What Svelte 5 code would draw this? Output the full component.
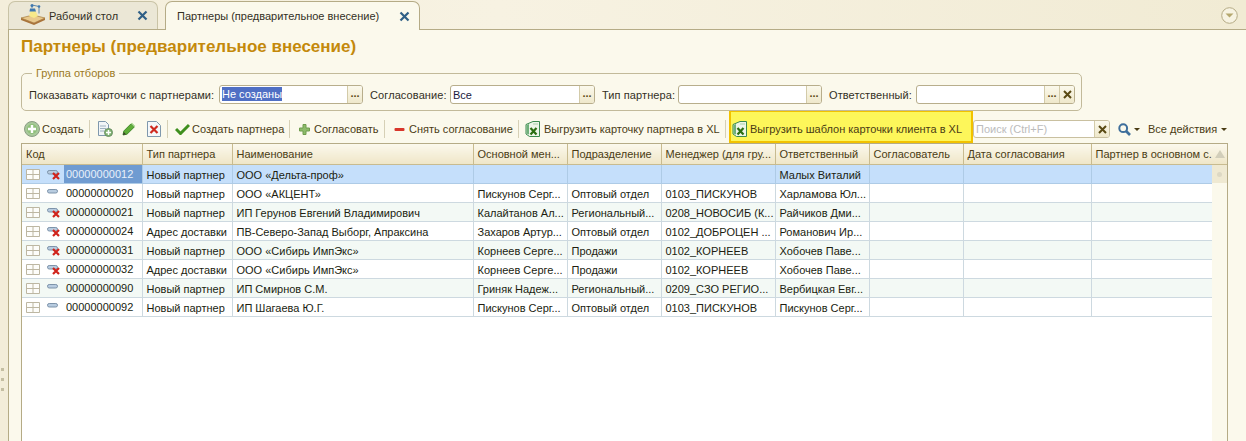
<script>
  const columns = [
    { title: 'Код', width: 120 },
    { title: 'Тип партнера', width: 90 },
    { title: 'Наименование', width: 241 },
    { title: 'Основной мен...', width: 94 },
    { title: 'Подразделение', width: 94 },
    { title: 'Менеджер (для гру...', width: 114 },
    { title: 'Ответственный', width: 94 },
    { title: 'Согласователь', width: 94 },
    { title: 'Дата согласования', width: 128 },
    { title: 'Партнер в основном с.', width: 122 }
  ];

  const rows = [
    { del: true, code: '00000000012', type: 'Новый партнер', name: 'ООО «Дельта-проф»', mgr: '', dept: '', group: '', owner: 'Малых Виталий' },
    { del: false, code: '00000000020', type: 'Новый партнер', name: 'ООО «АКЦЕНТ»', mgr: 'Пискунов Серг...', dept: 'Оптовый отдел', group: '0103_ПИСКУНОВ', owner: 'Харламова Юл...' },
    { del: true, code: '00000000021', type: 'Новый партнер', name: 'ИП Герунов Евгений Владимирович', mgr: 'Калайтанов Ал...', dept: 'Региональный...', group: '0208_НОВОСИБ (К...', owner: 'Райчиков Дми...' },
    { del: true, code: '00000000024', type: 'Адрес доставки', name: 'ПВ-Северо-Запад Выборг, Апраксина', mgr: 'Захаров Артур...', dept: 'Оптовый отдел', group: '0102_ДОБРОЦЕН ...', owner: 'Романович Ир...' },
    { del: true, code: '00000000031', type: 'Новый партнер', name: 'ООО «Сибирь ИмпЭкс»', mgr: 'Корнеев Серге...', dept: 'Продажи', group: '0102_КОРНЕЕВ', owner: 'Хобочев Паве...' },
    { del: true, code: '00000000032', type: 'Адрес доставки', name: 'ООО «Сибирь ИмпЭкс»', mgr: 'Корнеев Серге...', dept: 'Продажи', group: '0102_КОРНЕЕВ', owner: 'Хобочев Паве...' },
    { del: false, code: '00000000090', type: 'Новый партнер', name: 'ИП Смирнов С.М.', mgr: 'Гриняк Надеж...', dept: 'Региональный...', group: '0209_СЗО РЕГИО...', owner: 'Вербицкая Евг...' },
    { del: false, code: '00000000092', type: 'Новый партнер', name: 'ИП Шагаева Ю.Г.', mgr: 'Пискунов Серг...', dept: 'Оптовый отдел', group: '0103_ПИСКУНОВ', owner: 'Пискунов Серг...' }
  ];
</script>

{#snippet closeIcon()}
  <svg class="close" width="11" height="11" viewBox="0 0 11 11">
    <path d="M1.5 1.5l8 8M9.5 1.5l-8 8" stroke="#2f5f86" stroke-width="2.2" fill="none" />
  </svg>
{/snippet}

{#snippet excelIcon()}
  <svg width="15" height="16" viewBox="0 0 15 16">
    <path d="M1 3.500L8 .5h6.500v15H4.500L1 13z" fill="#edf5e8" stroke="#3b8a4e" />
    <path d="M1.500 4L4 3v10.500l-2.500-1z" fill="#6fb07a" />
    <path d="M5.500 7l6 6.500M11.500 7l-6 6.500" stroke="#2c6e12" stroke-width="2.200" fill="none" />
    <path d="M8 3h5" stroke="#a9cfa9" fill="none" />
  </svg>
{/snippet}

{#snippet caret()}
  <svg class="caret" width="6" height="3" viewBox="0 0 6 3"><path d="M0 0h6L3 3z" fill="#4a3c14" /></svg>
{/snippet}

{#snippet stateIcon(del)}
  <svg class="state" width="14" height="12" viewBox="0 0 14 12">
    <rect x="0.5" y="2.5" width="10" height="3.5" rx="1.7" fill="#b8cce0" stroke="#7d93aa" />
    {#if del}
      <path d="M6 5l6 6M12 5l-6 6" stroke="#d0231b" stroke-width="2.2" fill="none" />
    {/if}
  </svg>
{/snippet}

<div class="page">
  <header class="tabs">
    <div class="tab">
      <svg class="desk" width="26" height="24" viewBox="0 0 26 24">
        <path d="M1 15l12-3 12 3-11 5z" fill="#e9c98c" stroke="#a57a3c" stroke-width="0.7" />
        <path d="M1 15v2l13 5v-2zM25 15v2l-11 5v-2z" fill="#a9743a" />
        <path d="M9 13l2-6h4l3 6-4 2z" fill="#f7e98a" />
        <path d="M10 5.500h5l1 3h-6.500z" fill="#3f78b0" />
        <path d="M12 5V2l7 1.500v7" stroke="#5c87ad" stroke-width="1" fill="none" />
        <circle cx="12" cy="2.500" r="1.500" fill="#3f78b0" />
        <circle cx="19" cy="3.500" r="1.300" fill="#3f78b0" />
      </svg>
      <span class="tab-text">Рабочий стол</span>
      {@render closeIcon()}
    </div>
    <div class="tab active">
      <span class="tab-text">Партнеры (предварительное внесение)</span>
      {@render closeIcon()}
    </div>
    <svg class="menu-round" width="17" height="17" viewBox="0 0 17 17">
      <circle cx="8.500" cy="8.500" r="7.800" fill="#f7f3e2" stroke="#b5ab86" />
      <path d="M4.500 6.500h8l-4 4z" fill="#b5a86f" />
    </svg>
  </header>

  <div class="main">
    <div class="grip"><i></i><i></i><i></i></div>
    <section class="panel">
      <h1>Партнеры (предварительное внесение)</h1>

      <fieldset class="filters">
        <legend>Группа отборов</legend>
        <span class="label l1">Показавать карточки с партнерами:</span>
        <div class="field f1">
          <span class="value"><span class="selected">Не созданы</span></span>
          <span class="pick">...</span>
        </div>
        <span class="label l2">Согласование:</span>
        <div class="field f2">
          <span class="value">Все</span>
          <span class="pick">...</span>
        </div>
        <span class="label l3">Тип партнера:</span>
        <div class="field f3">
          <span class="value"></span>
          <span class="pick">...</span>
        </div>
        <span class="label l4">Ответственный:</span>
        <div class="field f4">
          <span class="value"></span>
          <span class="pick">...</span>
          <span class="pick clear">
            <svg width="9" height="9" viewBox="0 0 9 9"><path d="M1 1l7 7M8 1l-7 7" stroke="#5a4a14" stroke-width="2" fill="none" /></svg>
          </span>
        </div>
      </fieldset>

      <div class="toolbar">
        <button class="b-create">
          <svg width="16" height="16" viewBox="0 0 16 16">
            <circle cx="8" cy="8" r="7.500" fill="#a8c99a" stroke="#8a9c84" />
            <circle cx="8" cy="8" r="5" fill="#8fc07a" />
            <path d="M8 4v8M4 8h8" stroke="#fff" stroke-width="2.400" />
          </svg>
          Создать
        </button>
        <i class="sep"></i>
        <button class="b-copy">
          <svg width="16" height="16" viewBox="0 0 16 16">
            <path d="M1.500.5h7l3 3v11h-10z" fill="#f2f5f7" stroke="#7f98ad" />
            <path d="M3 5h6M3 7.500h6M3 10h4" stroke="#9fb2c2" />
            <circle cx="11.500" cy="11.500" r="4" fill="#7fb36f" stroke="#6d8f68" />
            <path d="M11.500 9v5M9 11.500h5" stroke="#fff" stroke-width="1.500" />
          </svg>
        </button>
        <button class="b-edit">
          <svg width="14" height="14" viewBox="0 0 14 14">
            <path d="M1 13l.8-4L9 1.800l3.300 3.200L5 12.200z" fill="#5fae38" stroke="#2f7a1c" stroke-width="0.8" />
            <path d="M9 1.800l1-1 3.200 3.200-1 1z" fill="#a5d48a" />
            <path d="M1 13l.8-3 2.200 2.200z" fill="#3a3a2a" />
          </svg>
        </button>
        <button class="b-del">
          <svg width="14" height="16" viewBox="0 0 14 16">
            <path d="M.5.500h9l4 4v11H.5z" fill="#f5f8fa" stroke="#7f98ad" />
            <path d="M3.500 5l7 7M10.500 5l-7 7" stroke="#cf2a20" stroke-width="2.200" />
          </svg>
        </button>
        <i class="sep"></i>
        <button class="b-partner">
          <svg width="15" height="12" viewBox="0 0 15 12"><path d="M1 6l4.500 4.500L14 2" stroke="#3f8f1e" stroke-width="3" fill="none" /></svg>
          Создать партнера
        </button>
        <i class="sep"></i>
        <button class="b-agree">
          <svg width="11" height="11" viewBox="0 0 11 11"><path d="M4 .5h3v3.500h3.500v3H7v3.500H4V7H.5V4H4z" fill="#8dbb6a" stroke="#6f9c4e" /></svg>
          Согласовать
        </button>
        <i class="sep"></i>
        <button class="b-revoke">
          <svg width="11" height="11" viewBox="0 0 11 11"><rect x="0.500" y="4" width="10" height="3" rx="1" fill="#d8362c" /></svg>
          Снять согласование
        </button>
        <i class="sep"></i>
        <button class="b-xl">
          {@render excelIcon()}
          Выгрузить карточку партнера в XL
        </button>
        <i class="sep"></i>
        <button class="hl">
          {@render excelIcon()}
          Выгрузить шаблон карточки клиента в XL
        </button>
        <div class="search">
          <span class="value ph">Поиск (Ctrl+F)</span>
          <span class="pick clear">
            <svg width="9" height="9" viewBox="0 0 9 9"><path d="M1 1l7 7M8 1l-7 7" stroke="#5a4a14" stroke-width="2" fill="none" /></svg>
          </span>
        </div>
        <button class="b-find">
          <svg width="13" height="13" viewBox="0 0 13 13">
            <circle cx="5.200" cy="5.200" r="3.900" fill="none" stroke="#3f6f9c" stroke-width="2" />
            <path d="M8 8l4 4" stroke="#3f6f9c" stroke-width="2.600" />
          </svg>
          {@render caret()}
        </button>
        <button class="b-all">Все действия {@render caret()}</button>
      </div>

      <div class="grid">
        <div class="grid-body">
          <table>
            <colgroup>
              {#each columns as c}
                <col style="width: {c.width}px" />
              {/each}
            </colgroup>
            <thead>
              <tr>
                {#each columns as c}
                  <th>{c.title}</th>
                {/each}
              </tr>
            </thead>
            <tbody>
              {#each rows as r, i}
                <tr class:current={i === 0} class:alt={i % 2 === 0}>
                  <td class="code">
                    <div class="code-wrap">
                      <svg class="tree" width="14" height="11" viewBox="0 0 14 11">
                        <path d="M.5.500h13v10H.500zM7 .5v10M.5 5.500h13" fill="#fdfdfa" stroke="#bdb7a2" />
                      </svg>
                      {@render stateIcon(r.del)}
                      <span class="code-text">{r.code}</span>
                    </div>
                  </td>
                  <td>{r.type}</td>
                  <td>{r.name}</td>
                  <td>{r.mgr}</td>
                  <td>{r.dept}</td>
                  <td>{r.group}</td>
                  <td>{r.owner}</td>
                  <td></td>
                  <td></td>
                  <td></td>
                </tr>
              {/each}
            </tbody>
          </table>
        </div>
        <div class="scroll">
          <div class="scroll-up">
            <svg width="10" height="8" viewBox="0 0 10 8"><path d="M5 0l5 8H0z" fill="#d2ceba" /></svg>
          </div>
          <div class="scroll-thumb"><i></i></div>
        </div>
      </div>
    </section>
  </div>
</div>

<style>
  :global(body) {
    margin: 0;
    font-family: "Liberation Sans", Arial, sans-serif;
    font-size: 11px;
    color: #33301f;
  }
  svg {
    flex: none;
  }
  .page {
    display: flex;
    flex-direction: column;
    height: 100vh;
    overflow: hidden;
    background: #f3edd9;
  }

  .tabs {
    display: flex;
    align-items: flex-end;
    height: 29px;
    padding-left: 8px;
    gap: 7px;
    flex: none;
    background: linear-gradient(90deg, #f4eedb, #f7f2e2 40%, #f1ebd4);
    position: relative;
  }
  .tab {
    box-sizing: border-box;
    width: 150px;
    height: 28px;
    display: flex;
    align-items: center;
    padding: 0 9px 0 11px;
    border: 1px solid #c9c3a6;
    border-bottom: none;
    border-radius: 7px 7px 0 0;
    background: #ebe7d6;
    color: #33301f;
  }
  .tab.active {
    width: 255px;
    height: 29px;
    margin-bottom: -1px;
    position: relative;
    background: #fbf9ec;
    border-color: #b5ab86;
  }
  .desk {
    margin: -2px 3px 0 0;
  }
  .tab-text {
    flex: 1;
    white-space: nowrap;
  }
  .menu-round {
    position: absolute;
    right: 8px;
    top: 7px;
  }

  .main {
    flex: 1;
    display: flex;
    min-height: 0;
  }
  .grip {
    width: 8px;
    flex: none;
    box-sizing: border-box;
    padding: 339px 0 0 1px;
    display: flex;
    flex-direction: column;
    gap: 7px;
  }
  .grip i {
    width: 3px;
    height: 3px;
    background: #c4bea2;
  }
  .panel {
    flex: 1;
    min-width: 0;
    box-sizing: border-box;
    display: flex;
    flex-direction: column;
    padding: 0 18px 0 12px;
    background: #fbf9ec;
    border-top: 1px solid #b5ab86;
    border-left: 1px solid #b5ab86;
  }
  h1 {
    margin: 7px 0 0;
    height: 20px;
    line-height: 20px;
    font-size: 17px;
    font-weight: bold;
    color: #c4890b;
    white-space: nowrap;
  }

  .filters {
    box-sizing: border-box;
    width: 1061px;
    height: 44px;
    margin: 10px 0 0;
    padding: 6px 0 0 7px;
    min-width: 0;
    display: flex;
    align-items: flex-start;
    border: 1px solid #c2ba9a;
    border-radius: 5px;
  }
  legend {
    margin-left: 3px;
    padding: 0 4px;
    color: #9c7a1e;
    line-height: 12px;
    font-size: 11px;
  }
  .label {
    white-space: nowrap;
    line-height: 20px;
    letter-spacing: 0.1px;
    flex: none;
  }
  .l1 { width: 190px; }
  .l2 { width: 80px; }
  .l3 { width: 76px; }
  .l4 { width: 87px; }
  .field {
    box-sizing: border-box;
    height: 19px;
    display: flex;
    border: 1px solid #b8ae8c;
    border-radius: 3px;
    background: #fff;
    overflow: hidden;
    margin-right: 7px;
    flex: none;
  }
  .f1, .f3 { width: 144px; }
  .f2 { width: 145px; }
  .f4 { width: 159px; margin-right: 0; }
  .value {
    flex: 1;
    min-width: 0;
    line-height: 18px;
    padding-left: 2px;
    color: #1a1a40;
    white-space: nowrap;
  }
  .selected {
    display: inline-block;
    height: 14px;
    line-height: 14px;
    background: #4f6fc4;
    color: #fff;
    vertical-align: 1px;
  }
  .pick {
    flex: none;
    width: 14px;
    border-left: 1px solid #d3cba9;
    background: linear-gradient(#fbf9ec, #efe8cb);
    color: #5a4a14;
    font-weight: bold;
    line-height: 15px;
    text-align: center;
  }
  .clear {
    display: flex;
    align-items: center;
    justify-content: center;
  }

  .toolbar {
    box-sizing: border-box;
    display: flex;
    align-items: center;
    height: 32px;
    padding-top: 4px;
    flex: none;
    color: #4a3c14;
  }
  button {
    font: inherit;
    color: inherit;
    border: 0;
    background: none;
    padding: 0;
    display: flex;
    align-items: center;
    white-space: nowrap;
    flex: none;
  }
  .sep {
    width: 1px;
    height: 18px;
    flex: none;
    background: #d6d0b6;
  }
  .b-create { gap: 2px; margin-left: 3px; width: 65px; }
  .b-copy { margin-left: 7px; }
  .b-edit { margin-left: 9px; }
  .b-del { margin: 0 6px 0 11px; }
  .b-partner { gap: 2px; margin-left: 7px; width: 114px; }
  .b-agree { gap: 4px; margin-left: 9px; width: 85px; }
  .b-revoke { gap: 4px; margin-left: 9px; width: 124px; }
  .b-xl { gap: 4px; margin-left: 6px; width: 200px; }
  .hl {
    box-sizing: border-box;
    width: 244px;
    height: 32px;
    margin: -4px 0 0 3px;
    padding: 4px 0 0 1px;
    gap: 3px;
    background: #fdf65a;
    border: 1px solid #f2c200;
    border-width: 1px 2px 2px 2px;
  }
  .search {
    box-sizing: border-box;
    width: 137px;
    height: 18px;
    display: flex;
    flex: none;
    border: 1px solid #c9c0a0;
    border-radius: 3px;
    background: #fff;
    overflow: hidden;
  }
  .ph {
    color: #bcbcbc;
    line-height: 16px;
  }
  .b-find { gap: 3px; margin-left: 8px; width: 22px; }
  .b-all { gap: 4px; margin-left: 8px; }

  .grid {
    flex: 1;
    min-height: 0;
    display: flex;
    box-sizing: border-box;
    width: 1207px;
    background: #fff;
    border: 1px solid #b5ab86;
    border-bottom: 0;
  }
  .grid-body {
    width: 1190px;
    flex: none;
  }
  table {
    table-layout: fixed;
    width: 1190px;
    border-collapse: collapse;
  }
  th {
    height: 20px;
    padding: 0 0 0 4px;
    font-weight: normal;
    text-align: left;
    color: #4a3c14;
    white-space: nowrap;
    overflow: hidden;
    background: linear-gradient(#fbf8ec, #efe6c8);
    border-right: 1px solid #c8bb90;
    border-bottom: 1px solid #c8bb90;
  }
  td {
    height: 17px;
    padding: 1px 0 0 4px;
    color: #201d10;
    white-space: nowrap;
    overflow: hidden;
    border-right: 1px solid #cdd9e0;
    border-bottom: 1px solid #cdd9e0;
  }
  tr.alt td { background: #f3f9f5; }
  tr.current td {
    background: #c5dffb;
    border-color: #aecbe6;
  }
  td.code { padding: 0; height: 18px; }
  .code-wrap {
    display: flex;
    align-items: center;
    height: 18px;
    padding-left: 4px;
  }
  .state { margin-left: 7px; }
  .code-text {
    box-sizing: border-box;
    margin-left: 3px;
    padding: 1px 0 0 2px;
    flex: 1;
    line-height: 17px;
  }
  tr.current .code-text {
    background: #6f9bd1;
    color: #e8f0fa;
  }

  .scroll {
    flex: 1;
    background: #fbf9ec;
    display: flex;
    flex-direction: column;
  }
  .scroll-up {
    height: 20px;
    display: flex;
    align-items: center;
    justify-content: center;
    background: linear-gradient(#fbf8ec, #efe6c8);
    border-bottom: 1px solid #c8bb90;
  }
  .scroll-thumb {
    height: 18px;
    background: #efe9d2;
    display: flex;
    align-items: center;
    justify-content: center;
  }
  .scroll-thumb i {
    width: 5px;
    height: 5px;
    border-radius: 50%;
    background: #ddd8c4;
  }
</style>
